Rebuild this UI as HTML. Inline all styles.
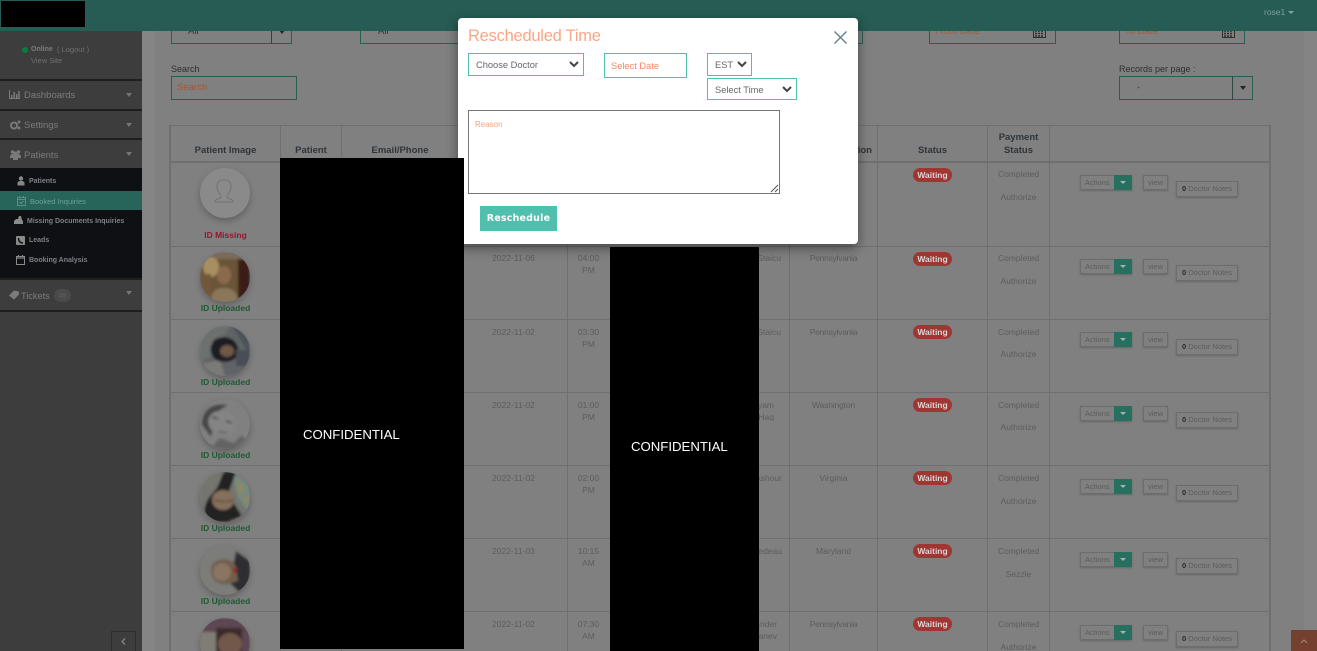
<!DOCTYPE html>
<html><head><meta charset="utf-8"><title>Booked Inquiries</title>
<style>
html,body{margin:0;padding:0;width:1317px;height:651px;overflow:hidden}
body{background:#808080;font-family:"Liberation Sans",sans-serif;color:#5c5c5c}
#p{position:absolute;left:0;top:0;width:1317px;height:651px;overflow:hidden;background:#808080}
#p div,#p span{position:absolute;box-sizing:border-box;white-space:nowrap}
svg{position:absolute;overflow:visible}
.t{font-size:8.5px;line-height:12px;text-align:center}
.h{font-size:9.5px;font-weight:bold;line-height:13px;color:#2f343a;text-align:center}
.line{background:#6f6f6f}
.m{left:0;width:142px;background:#3d3d3d}
.sep{left:0;width:142px;height:2px;background:#1f1f1f}
.mt{font-size:9.5px;color:#7c7c7c;line-height:12px}
.st{font-size:7px;font-weight:bold;color:#7d8088;line-height:10px}
.car{width:0;height:0;border:3.5px solid transparent;border-top:4px solid #6f757c;border-bottom:0}
.pill{left:913px;width:39px;height:14px;border-radius:7px;background:#a03632;color:#d8d8d8;font-size:8.5px;font-weight:bold;line-height:14px;text-align:center}
.act{left:1080px;width:52px;height:15px;border:1px solid #6d6d6d;background:#808080;font-size:7.5px;line-height:13px;padding-left:4px;box-shadow:0 1px 2px rgba(0,0,0,.2)}
.tg{left:1114px;width:18px;height:15px;background:#27705f}
.tg:after{content:"";position:absolute;left:6px;top:6px;border:3px solid transparent;border-top:3px solid #a5b5b2;border-bottom:0}
.view{left:1143px;width:25px;height:15px;border:1px solid #6d6d6d;font-size:7.5px;line-height:13px;text-align:center;box-shadow:0 1px 2px rgba(0,0,0,.2)}
.note{left:1176px;width:62px;height:16px;border:1px solid #6d6d6d;font-size:7.5px;line-height:14px;text-align:center;box-shadow:0 1px 2px rgba(0,0,0,.2)}
.note b{color:#2a2a2a}
.idl{left:170px;width:111px;text-align:center;font-size:8.5px;font-weight:bold;line-height:10px;color:#1d5a33}
.box{border:1px solid #285f55}
.in{border:1px solid #4fc0ad;background:#fff;color:#666;font-size:9.3px}
.av{left:200px;width:50px;height:50px;border-radius:50%;overflow:hidden;box-shadow:0 3px 7px rgba(0,0,0,.25);background:#7a7a7a}
.av svg{left:0;top:0}
.conf{color:#fff;font-size:13.2px;line-height:16px}
.f{color:#a9552f;font-size:9.5px}
</style></head>
<body>
<div id="p">
<div style="left:142px;top:0;width:13px;height:651px;background:#858585"></div>
<div style="left:1304px;top:0;width:13px;height:651px;background:#848484"></div>

<div class="box" style="left:171px;top:20px;width:121px;height:24px"></div>
<div style="left:271px;top:20px;width:1px;height:24px;background:#3d3d3d"></div>
<div class="t" style="left:188px;top:26px;color:#333;font-size:9.5px">All</div>
<div class="car" style="left:279px;top:30px;border-top-color:#222"></div>
<div class="box" style="left:360px;top:20px;width:120px;height:24px"></div>
<div class="t" style="left:378px;top:26px;color:#333;font-size:9.5px">All</div>
<div class="box" style="left:780px;top:20px;width:83px;height:24px"></div>
<div class="box" style="left:929px;top:20px;width:127px;height:24px"></div>
<div class="t f" style="left:935px;top:26px">From Date</div>
<svg style="left:1033px;top:28px" width="13" height="10"><rect x=".5" y=".5" width="12" height="9" fill="none" stroke="#2e2e2e"/><path d="M2 3h9M2 5.500h9M2 8h9" stroke="#2e2e2e" stroke-dasharray="2 1" stroke-width="1.500"/></svg>
<div class="box" style="left:1119px;top:20px;width:126px;height:24px"></div>
<div class="t f" style="left:1125px;top:26px">To Date</div>
<svg style="left:1222px;top:28px" width="13" height="10"><rect x=".5" y=".5" width="12" height="9" fill="none" stroke="#2e2e2e"/><path d="M2 3h9M2 5.500h9M2 8h9" stroke="#2e2e2e" stroke-dasharray="2 1" stroke-width="1.500"/></svg>

<div class="t" style="left:171px;top:63px;color:#2e2e2e;font-size:9px">Search</div>
<div class="box" style="left:171px;top:76px;width:126px;height:24px"></div>
<div class="t f" style="left:177px;top:82px">Search</div>
<div class="t" style="left:1119px;top:63px;color:#2e2e2e;font-size:9px">Records per page :</div>
<div class="box" style="left:1119px;top:76px;width:134px;height:24px"></div>
<div style="left:1232px;top:76px;width:1px;height:24px;background:#2f4a45"></div>
<div class="t" style="left:1137px;top:81px;color:#222">-</div>
<div class="car" style="left:1240px;top:86px;border-top-color:#222"></div>

<div class="line" style="left:169px;top:125px;width:2px;height:526px"></div>
<div class="line" style="left:169px;top:125px;width:1102px;height:1px"></div>
<div class="line" style="left:1269px;top:125px;width:2px;height:526px"></div>
<div class="line" style="left:170px;top:161px;width:1100px;height:2px"></div>
<div class="line" style="left:170px;top:246px;width:1100px;height:1px"></div>
<div class="line" style="left:170px;top:319px;width:1100px;height:1px"></div>
<div class="line" style="left:170px;top:392px;width:1100px;height:1px"></div>
<div class="line" style="left:170px;top:465px;width:1100px;height:1px"></div>
<div class="line" style="left:170px;top:538px;width:1100px;height:1px"></div>
<div class="line" style="left:170px;top:611px;width:1100px;height:1px"></div>
<div class="line" style="left:280px;top:125px;width:1px;height:526px"></div>
<div class="line" style="left:341px;top:125px;width:1px;height:526px"></div>
<div class="line" style="left:567px;top:125px;width:1px;height:526px"></div>
<div class="line" style="left:789px;top:125px;width:1px;height:526px"></div>
<div class="line" style="left:877px;top:125px;width:1px;height:526px"></div>
<div class="line" style="left:987px;top:125px;width:1px;height:526px"></div>
<div class="line" style="left:1049px;top:125px;width:1px;height:526px"></div>

<div class="h" style="left:170px;top:144px;width:111px">Patient Image</div>
<div class="h" style="left:281px;top:144px;width:60px">Patient</div>
<div class="h" style="left:342px;top:144px;width:116px">Email/Phone</div>
<div class="h" style="left:790px;top:144px;width:82px;text-align:right">Location</div>
<div class="h" style="left:878px;top:144px;width:109px">Status</div>
<div class="h" style="left:988px;top:131px;width:61px">Payment<br>Status</div>

<div class="av" style="top:168px;background:#8a8a8a"><svg width="50" height="50" viewBox="0 0 50 50"><path d="M15 33c0-2 5-2 6-4 0-1 0-2-1-3-2-2-3-5-3-8 0-4 3-6 5-6h4c2 0 5 2 5 6 0 3-1 6-3 8-1 1-1 2-1 3 1 2 6 2 6 4 0 1-1 1-2 1H17c-1 0-2 0-2-1z" fill="none" stroke="#6b7477" stroke-width="1"/></svg></div>
<div class="idl" style="top:230px;color:#96162a">ID Missing</div>

<div class="av" style="top:252px"><svg width="50" height="50" viewBox="0 0 50 50"><defs><filter id="b"><feGaussianBlur stdDeviation="1.200"/></filter></defs><g filter="url(#b)"><rect width="50" height="50" fill="#6b5538"/><rect x="38" width="12" height="50" fill="#3a1c12"/><rect width="50" height="7" fill="#7a6a58"/><ellipse cx="11" cy="15" rx="8" ry="10" fill="#a88f62"/><rect x="2" y="22" width="9" height="28" fill="#71593a"/><ellipse cx="24" cy="23" rx="7" ry="9" fill="#8a6a4e"/><path d="M11 50c0-12 6-14 13-14s14 3 14 14z" fill="#8a7658"/></g></svg></div>
<div class="idl" style="top:303px">ID Uploaded</div>

<div class="av" style="top:326px"><svg width="50" height="50" viewBox="0 0 50 50"><g filter="url(#b)"><rect width="50" height="50" fill="#5f6468"/><path d="M0 0h30L12 30 0 36z" fill="#6c6f6e"/><path d="M32 0h18v30z" fill="#4b5358"/><path d="M0 38 20 34 25 50H0z" fill="#7a7a76"/><path d="M14 14c8-6 22-3 24 8 2 8-4 14-14 14-9 0-15-7-13-16z" fill="#1f1f21"/><ellipse cx="27" cy="25" rx="7" ry="6" fill="#6f5848"/><path d="M36 24h14v16H36z" fill="#484e54"/></g></svg></div>
<div class="idl" style="top:377px">ID Uploaded</div>

<div class="av" style="top:399px"><svg width="50" height="50" viewBox="0 0 50 50"><g filter="url(#b)"><rect width="50" height="50" fill="#808080"/><path d="M2 26C1 10 14 3 28 6c-8 4-12 8-13 14l-4 18z" fill="#474747"/><ellipse cx="22" cy="24" rx="14" ry="12" fill="#848484" transform="rotate(20 22 24)"/><path d="M12 18l6 2M26 22l6 2" stroke="#444" stroke-width="1.500"/><path d="M18 32c4 2 7 2 9 1" stroke="#5a5a5a" stroke-width="1.500" fill="none"/><path d="M12 48l8-9 14 5 8-8 4 5-14 11z" fill="#646464"/></g></svg></div>
<div class="idl" style="top:450px">ID Uploaded</div>

<div class="av" style="top:472px"><svg width="50" height="50" viewBox="0 0 50 50"><g filter="url(#b)"><rect width="50" height="50" fill="#747570"/><path d="M32 0l18 12v30L38 26z" fill="#75897f"/><path d="M38 8l6 8-6 8zM44 22l6 6-6 6z" fill="#8e8a5a"/><path d="M24 0h12L28 22 42 44 28 50H8C2 42 4 30 12 22 20 14 20 6 24 0z" fill="#242120"/><ellipse cx="23" cy="28" rx="11" ry="10" fill="#85705c"/><path d="M14 28c6 2 14 2 20 0" stroke="#4a382c" fill="none"/></g></svg></div>
<div class="idl" style="top:523px">ID Uploaded</div>

<div class="av" style="top:545px"><svg width="50" height="50" viewBox="0 0 50 50"><g filter="url(#b)"><rect width="50" height="50" fill="#7c7c78"/><path d="M36 6l14 10v26l-10 6-10-10z" fill="#2f2f30"/><path d="M12 20c6-8 20-8 24 2l2 14-10 3c-12 2-20-8-16-19z" fill="#6f5e4b"/><ellipse cx="22" cy="27" rx="9" ry="9" fill="#8a7462"/><rect x="33" y="23" width="4" height="5" fill="#8e2c25"/></g></svg></div>
<div class="idl" style="top:596px">ID Uploaded</div>

<div class="av" style="top:618px"><svg width="50" height="50" viewBox="0 0 50 50"><g filter="url(#b)"><rect width="50" height="50" fill="#5b4652"/><rect x="0" y="14" width="16" height="36" fill="#7f7d75"/><path d="M16 10h26v24H16z" fill="#3b2b2a"/><ellipse cx="30" cy="26" rx="12" ry="11" fill="#72584c"/></g></svg></div>

<!-- row 1 -->
<div class="pill" style="top:168px">Waiting</div>
<div class="t" style="left:988px;top:168px;width:61px">Completed</div>
<div class="t" style="left:988px;top:191px;width:61px">Authorize</div>
<div class="act" style="top:175px">Actions</div><div class="tg" style="top:175px"></div>
<div class="view" style="top:175px">view</div>
<div class="note" style="top:181px"><b>0</b> Doctor Notes</div>

<!-- row 2 -->
<div class="t" style="left:462px;top:252px;width:103px">2022-11-06</div>
<div class="t" style="left:568px;top:252px;width:41px">04:00<br>PM</div>
<div class="t" style="left:700px;top:252px;width:81px;text-align:right">Staicu</div>
<div class="t" style="left:790px;top:252px;width:87px;letter-spacing:-.25px">Pennsylvania</div>
<div class="pill" style="top:252px">Waiting</div>
<div class="t" style="left:988px;top:252px;width:61px">Completed</div>
<div class="t" style="left:988px;top:275px;width:61px">Authorize</div>
<div class="act" style="top:259px">Actions</div><div class="tg" style="top:259px"></div>
<div class="view" style="top:259px">view</div>
<div class="note" style="top:265px"><b>0</b> Doctor Notes</div>

<!-- row 3 -->
<div class="t" style="left:462px;top:326px;width:103px">2022-11-02</div>
<div class="t" style="left:568px;top:326px;width:41px">03:30<br>PM</div>
<div class="t" style="left:700px;top:326px;width:81px;text-align:right">Staicu</div>
<div class="t" style="left:790px;top:326px;width:87px;letter-spacing:-.25px">Pennsylvania</div>
<div class="pill" style="top:325px">Waiting</div>
<div class="t" style="left:988px;top:326px;width:61px">Completed</div>
<div class="t" style="left:988px;top:348px;width:61px">Authorize</div>
<div class="act" style="top:332px">Actions</div><div class="tg" style="top:332px"></div>
<div class="view" style="top:332px">view</div>
<div class="note" style="top:339px"><b>0</b> Doctor Notes</div>

<!-- row 4 -->
<div class="t" style="left:462px;top:399px;width:103px">2022-11-02</div>
<div class="t" style="left:568px;top:399px;width:41px">01:00<br>PM</div>
<div class="t" style="left:700px;top:399px;width:74px;text-align:right">Myam<br>Haq</div>
<div class="t" style="left:790px;top:399px;width:87px;letter-spacing:-.15px">Washington</div>
<div class="pill" style="top:398px">Waiting</div>
<div class="t" style="left:988px;top:399px;width:61px">Completed</div>
<div class="t" style="left:988px;top:421px;width:61px">Authorize</div>
<div class="act" style="top:406px">Actions</div><div class="tg" style="top:406px"></div>
<div class="view" style="top:406px">view</div>
<div class="note" style="top:412px"><b>0</b> Doctor Notes</div>

<!-- row 5 -->
<div class="t" style="left:462px;top:472px;width:103px">2022-11-02</div>
<div class="t" style="left:568px;top:472px;width:41px">02:00<br>PM</div>
<div class="t" style="left:700px;top:472px;width:82px;text-align:right">Ashour</div>
<div class="t" style="left:790px;top:472px;width:87px">Virginia</div>
<div class="pill" style="top:471px">Waiting</div>
<div class="t" style="left:988px;top:472px;width:61px">Completed</div>
<div class="t" style="left:988px;top:495px;width:61px">Authorize</div>
<div class="act" style="top:479px">Actions</div><div class="tg" style="top:479px"></div>
<div class="view" style="top:479px">view</div>
<div class="note" style="top:485px"><b>0</b> Doctor Notes</div>

<!-- row 6 -->
<div class="t" style="left:462px;top:545px;width:103px">2022-11-03</div>
<div class="t" style="left:568px;top:545px;width:41px">10:15<br>AM</div>
<div class="t" style="left:700px;top:545px;width:82px;text-align:right">Nedeau</div>
<div class="t" style="left:790px;top:545px;width:87px">Maryland</div>
<div class="pill" style="top:544px">Waiting</div>
<div class="t" style="left:988px;top:545px;width:61px">Completed</div>
<div class="t" style="left:988px;top:568px;width:61px">Sezzle</div>
<div class="act" style="top:552px">Actions</div><div class="tg" style="top:552px"></div>
<div class="view" style="top:552px">view</div>
<div class="note" style="top:558px"><b>0</b> Doctor Notes</div>

<!-- row 7 -->
<div class="t" style="left:462px;top:618px;width:103px">2022-11-02</div>
<div class="t" style="left:568px;top:618px;width:41px">07:30<br>AM</div>
<div class="t" style="left:700px;top:618px;width:77px;text-align:right">Alexander<br>Ganev</div>
<div class="t" style="left:790px;top:618px;width:87px;letter-spacing:-.25px">Pennsylvania</div>
<div class="pill" style="top:617px">Waiting</div>
<div class="t" style="left:988px;top:618px;width:61px">Completed</div>
<div class="t" style="left:988px;top:641px;width:61px">Authorize</div>
<div class="act" style="top:625px">Actions</div><div class="tg" style="top:625px"></div>
<div class="view" style="top:625px">view</div>
<div class="note" style="top:631px"><b>0</b> Doctor Notes</div>

<div style="left:1291px;top:630px;width:26px;height:21px;background:#754030"></div>
<svg style="left:1300px;top:639px" width="8" height="5"><path d="M1 4l3-3 3 3" fill="none" stroke="#a98478" stroke-width="1"/></svg>

<!-- sidebar -->
<div class="m" style="top:0;height:651px"></div>
<div class="sep" style="top:79px"></div>
<div class="sep" style="top:109px"></div>
<div class="sep" style="top:138px"></div>
<div class="sep" style="top:278px"></div>
<div class="sep" style="top:310px"></div>
<div style="left:22px;top:47px;width:6px;height:6px;border-radius:50%;background:#0d7a3e"></div>
<div class="st" style="left:31px;top:45px;color:#7d7d7d">Online</div>
<div class="st" style="left:57px;top:45px;font-weight:normal;font-size:7.5px;color:#6f6f6f">( Logout )</div>
<div class="st" style="left:31px;top:56px;font-weight:normal;font-size:7.5px;color:#6f6f6f">View Site</div>

<svg style="left:9px;top:90px" width="11" height="9"><path d="M.5 0v8.500H11" fill="none" stroke="#7a7a7a"/><path d="M2 8V5h1.500v3zM4.500 8V2H6v6zM7 8V4h1.500v4zM9.200 8V1h1.500v7z" fill="#7a7a7a"/></svg>
<div class="mt" style="left:24px;top:90px">Dashboards</div>
<div class="car" style="left:126px;top:93px"></div>
<svg style="left:10px;top:120px" width="11" height="10"><circle cx="4" cy="5.500" r="3" fill="none" stroke="#7a7a7a" stroke-width="2"/><circle cx="9" cy="2" r="1.500" fill="#7a7a7a"/><circle cx="9" cy="8" r="1.500" fill="#7a7a7a"/></svg>
<div class="mt" style="left:24px;top:120px">Settings</div>
<div class="car" style="left:126px;top:123px"></div>
<svg style="left:10px;top:150px" width="11" height="10"><circle cx="2.500" cy="2" r="1.700" fill="#7a7a7a"/><circle cx="8.500" cy="2" r="1.700" fill="#7a7a7a"/><circle cx="5.500" cy="3.500" r="2" fill="#7a7a7a"/><path d="M0 7c0-3 3-3 3-3h5s3 0 3 3v1H8v2H3V8H0z" fill="#7a7a7a"/></svg>
<div class="mt" style="left:24px;top:150px">Patients</div>
<div class="car" style="left:126px;top:152px"></div>

<div style="left:0;top:168px;width:142px;height:110px;background:#0f1014"></div>
<div style="left:0;top:191px;width:142px;height:19px;background:#27655b"></div>
<svg style="left:17px;top:176px" width="8" height="10"><circle cx="4" cy="2.500" r="2.200" fill="#878787"/><path d="M.5 9.500V7C.5 5.500 2 5 4 5s3.500.5 3.500 2v2.500z" fill="#878787"/></svg>
<div class="st" style="left:29px;top:177px">Patients</div>
<svg style="left:17px;top:196px" width="9" height="10"><rect x=".5" y="1.500" width="8" height="8" fill="none" stroke="#5a8f87"/><path d="M.5 3.500h8M2.500 0v2M6.500 0v2M2.500 6l1.500 1.500 2.500-2.500" stroke="#5a8f87" fill="none"/></svg>
<div class="st" style="left:30px;top:197px;color:#6aa198;font-weight:normal;font-size:7.5px">Booked Inquiries</div>
<svg style="left:14px;top:216px" width="11" height="9"><path d="M0 8V5L2 3h2l1-3h2l1 4 1 1v3z" fill="#8a8a8a"/></svg>
<div class="st" style="left:27px;top:217px">Missing Documents Inquiries</div>
<svg style="left:16px;top:236px" width="9" height="9"><rect width="9" height="9" rx="1" fill="#8a8a8a"/><path d="M2.500 2c0 3 1.500 5 4.500 5" stroke="#0f1014" stroke-width="1.500" fill="none"/></svg>
<div class="st" style="left:29px;top:236px">Leads</div>
<svg style="left:16px;top:255px" width="9" height="10"><rect x=".5" y="1.500" width="8" height="8" fill="none" stroke="#8a8a8a"/><path d="M.5 3h8M2.500 0v2M6.500 0v2" stroke="#8a8a8a" stroke-width="1.200"/></svg>
<div class="st" style="left:29px;top:256px">Booking Analysis</div>

<svg style="left:9px;top:290px" width="11" height="10"><path d="M0 5.500 5 .5l5 1v3l-5 5z" fill="#7c7c7c"/></svg>
<div class="mt" style="left:21px;top:290px;font-size:9.2px">Tickets</div>
<div style="left:54px;top:289px;width:17px;height:13px;border-radius:7px;background:#4a4a4a;color:#5f5f5f;font-size:7.5px;line-height:13px;text-align:center">45</div>
<div class="car" style="left:126px;top:291px"></div>

<div style="left:111px;top:631px;width:25px;height:20px;border:1px solid #2d2d2d;border-bottom:0"></div>
<svg style="left:121px;top:638px" width="5" height="7"><path d="M4 .5 1 3.500l3 3" fill="none" stroke="#7b8590" stroke-width="1.300"/></svg>

<!-- topbar -->
<div style="left:0;top:0;width:1317px;height:31px;background:#265c54"></div>
<div style="left:1px;top:1px;width:84px;height:26px;background:#000"></div>
<div style="left:1264px;top:6px;font-size:8.5px;line-height:12px;color:#7fa09a">rose1</div>
<div class="car" style="left:1288px;top:11px;border-top-color:#85a39e;border-width:3px"></div>

<!-- modal -->
<div style="left:458px;top:18px;width:400px;height:226px;background:#fff;border-radius:4px;box-shadow:0 4px 12px rgba(0,0,0,.45)"></div>
<div style="left:468px;top:25px;font-size:16.5px;line-height:22px;color:#f9a688;letter-spacing:-.25px">Rescheduled Time</div>
<svg style="left:834px;top:31px" width="13" height="13"><path d="M.5.500l12 12M12.500.500l-12 12" stroke="#5f7d8c" stroke-width="1.300"/></svg>

<div class="in" style="left:468px;top:53px;width:116px;height:23px;padding-left:7px;line-height:23px">Choose Doctor</div>
<svg style="left:569px;top:61px" width="10" height="7"><path d="M1 1l4 4 4-4" fill="none" stroke="#444" stroke-width="2"/></svg>
<div class="in" style="left:604px;top:53px;width:83px;height:25px;padding-left:6px;line-height:24px;color:#f08a5c">Select Date</div>
<div class="in" style="left:707px;top:53px;width:45px;height:23px;padding-left:7px;line-height:23px">EST</div>
<svg style="left:737px;top:61px" width="10" height="7"><path d="M1 1l4 4 4-4" fill="none" stroke="#444" stroke-width="2"/></svg>
<div class="in" style="left:707px;top:78px;width:90px;height:22px;padding-left:7px;line-height:22px">Select Time</div>
<svg style="left:782px;top:86px" width="10" height="7"><path d="M1 1l4 4 4-4" fill="none" stroke="#444" stroke-width="2"/></svg>
<div style="left:468px;top:110px;width:312px;height:84px;border:1px solid #767676;background:#fff;font-size:8px;line-height:10px;color:#f4a582;padding:9px 6px">Reason</div>
<svg style="left:770px;top:184px" width="9" height="9"><path d="M1 8l7-7M5 8l3-3" stroke="#555" stroke-width="1"/></svg>
<div style="left:480px;top:206px;width:77px;height:25px;background:#4fc0ad;color:#fff;font-size:9.5px;font-weight:bold;line-height:25px;text-align:center;letter-spacing:.2px;font-family:'DejaVu Sans',sans-serif">Reschedule</div>

<!-- redactions -->
<div style="left:280px;top:158px;width:184px;height:491px;background:#000"></div>
<div style="left:610px;top:247px;width:149px;height:404px;background:#000"></div>
<div class="conf" style="left:303px;top:427px">CONFIDENTIAL</div>
<div class="conf" style="left:631px;top:439px">CONFIDENTIAL</div>
</div>
</body></html>
